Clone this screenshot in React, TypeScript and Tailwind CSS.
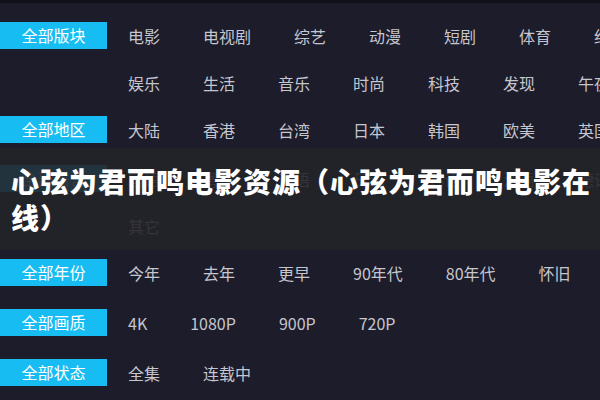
const groups = [
  {
    label: '全部版块',
    mt: 'mt-0',
    lines: [
      ['电影', '电视剧', '综艺', '动漫', '短剧', '体育', '纪录片'],
      ['娱乐', '生活', '音乐', '时尚', '科技', '发现', '午夜'],
    ],
  },
  {
    label: '全部地区',
    mt: 'mt-0',
    lines: [['大陆', '香港', '台湾', '日本', '韩国', '欧美', '英国']],
  },
  {
    label: '全部语言',
    mt: 'mt-[2px]',
    lines: [
      ['国语', '粤语', '英语', '日语', '韩语', '法语', '德语'],
      ['其它'],
    ],
  },
  {
    label: '全部年份',
    mt: 'mt-0',
    lines: [['今年', '去年', '更早', '90年代', '80年代', '怀旧']],
  },
  {
    label: '全部画质',
    mt: 'mt-[3px]',
    lines: [['4K', '1080P', '900P', '720P']],
  },
  {
    label: '全部状态',
    mt: 'mt-[3px]',
    lines: [['全集', '连载中']],
  },
];

export default function App() {
  return (
    <div
      className="relative w-[600px] h-[400px] overflow-hidden bg-[#1c1c2b]"
      style={{ fontFamily: '"Noto Sans CJK SC", "Noto Sans", sans-serif' }}
    >
      <div className="h-[3px] bg-[#11111a]" />
      <div className="pt-[9px]">
        {groups.map((g) => (
          <div key={g.label} className={g.mt}>
            {g.lines.map((line, i) => (
              <div key={i} className="flex items-center h-[47px] whitespace-nowrap">
                <div className="w-[107px] shrink-0">
                  {i === 0 && (
                    <div className="h-[27px] bg-[#17bdf2] text-white text-[16px] leading-[27px] text-center">
                      {g.label}
                    </div>
                  )}
                </div>
                <div className="flex gap-[43px] pl-[21px] text-[16px] text-[#c6c6ce]">
                  {line.map((item) => (
                    <span key={item} className="shrink-0">
                      {item}
                    </span>
                  ))}
                </div>
              </div>
            ))}
          </div>
        ))}
      </div>

      <div className="absolute left-0 right-0 top-[148px] h-[102px] bg-[#232329]/90 flex items-center pl-[11px] pr-[4px]">
        <p className="text-white text-[28px] leading-[36px] font-black tracking-[1px]">
          心弦为君而鸣电影资源（心弦为君而鸣电影在线）
        </p>
      </div>
    </div>
  );
}
